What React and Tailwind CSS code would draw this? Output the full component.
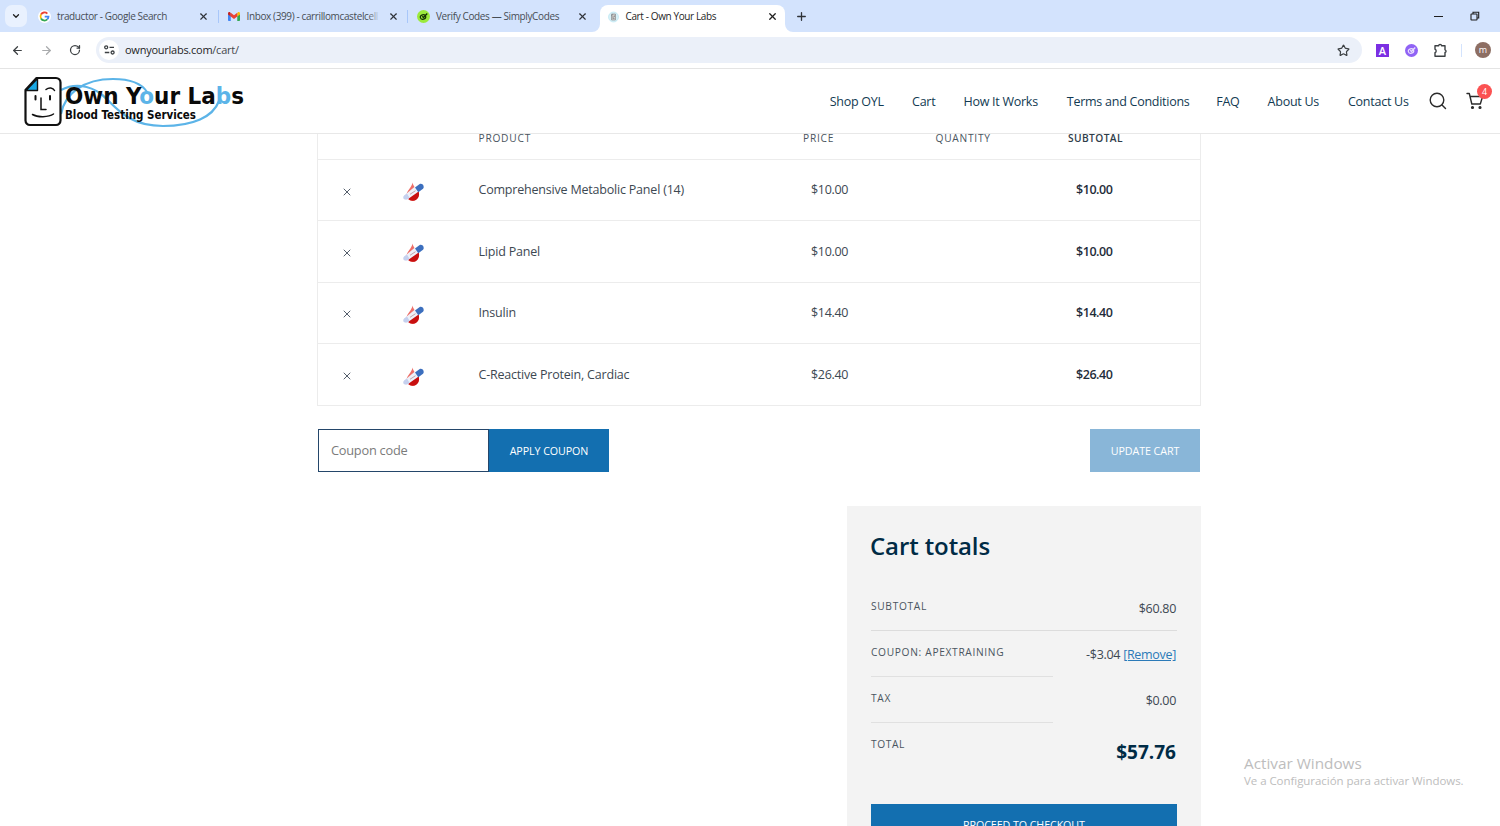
// src/App.jsx
import React, { useState } from 'react';
import { ArrowLeft, ArrowRight, ChevronDown, Plus, RotateCw, Star, X } from 'lucide-react';

const tabs = [
  { title: 'traductor - Google Search', icon: 'google' },
  { title: 'Inbox (399) - carrillomcastelcell', icon: 'gmail', fade: true },
  { title: 'Verify Codes — SimplyCodes', icon: 'simply' },
];

const navLinks = [
  { label: 'Shop OYL', width: 'w-[55px]' },
  { label: 'Cart', width: 'w-[24px]' },
  { label: 'How It Works', width: 'w-[76px]' },
  { label: 'Terms and Conditions', width: 'w-[122px]' },
  { label: 'FAQ', width: 'w-[24px]' },
  { label: 'About Us', width: 'w-[53px]' },
  { label: 'Contact Us', width: 'w-[62px]' },
];

const items = [
  { name: 'Comprehensive Metabolic Panel (14)', price: '$10.00' },
  { name: 'Lipid Panel', price: '$10.00' },
  { name: 'Insulin', price: '$14.40' },
  { name: 'C-Reactive Protein, Cardiac', price: '$26.40' },
];

const COLS = 'grid grid-cols-[60px_100.5px_324.5px_132.500px_132.500px_1fr]';

function GoogleIcon() {
  return (
    <svg width="13" height="13" viewBox="0 0 26 26">
      <circle cx="13" cy="13" r="13" fill="#fff" />
      <g fill="none" strokeWidth="3.6">
        <path d="M18.7 7.3A8 8 0 0 0 6 9.1" stroke="#ea4335" />
        <path d="M6 9.1a8 8 0 0 0 0 7.8" stroke="#fbbc05" />
        <path d="M6 16.9a8 8 0 0 0 12.5 2" stroke="#34a853" />
        <path d="M18.5 18.9A8 8 0 0 0 21 13.2h-7.6" stroke="#4285f4" />
      </g>
    </svg>
  );
}

function GmailIcon() {
  return (
    <svg width="12" height="9" viewBox="0 0 24 18">
      <path d="M0 3v13.5C0 17.3.7 18 1.5 18H5.5V8z" fill="#4285f4" />
      <path d="M24 3v13.5c0 .8-.7 1.5-1.5 1.5H18.5V8z" fill="#34a853" />
      <path d="M18.5 2.5V9L24 5V2.5C24 .3 21.5-.8 19.8.5z" fill="#fbbc04" />
      <path d="M5.5 2.5V9L0 5V2.5C0 .3 2.5-.8 4.2.5z" fill="#c5221f" />
      <path d="M5.5 1.5V9l6.5 5 6.5-5V1.5L12 6.5z" fill="#ea4335" />
    </svg>
  );
}

function SimplyIcon({ bg, fg, size }) {
  return (
    <svg width={size} height={size} viewBox="0 0 26 26">
      <circle cx="13" cy="13" r="13" fill={bg} />
      <ellipse cx="12" cy="14" rx="5.5" ry="4.5" fill="none" stroke={fg} strokeWidth="2.4" transform="rotate(-15 12 14)" />
      <path d="M10.500 12.500l2.500 2.500 7.500-8" fill="none" stroke={fg} strokeWidth="2.800" />
    </svg>
  );
}

function CartFavicon() {
  return (
    <svg width="11" height="12" viewBox="0 0 22 24">
      <ellipse cx="11" cy="12" rx="10" ry="10" fill="#d9f1f7" stroke="#a5deee" />
      <path d="M7 6h8v12H7z" fill="#d3cdc8" stroke="#8b9296" strokeWidth="1.5" />
      <path d="M7 10l3-4M10 10v4M13 9v3M9 15h4" stroke="#6f7a80" strokeWidth="1.3" />
    </svg>
  );
}

function TabIcon({ name }) {
  if (name === 'google') return <GoogleIcon />;
  if (name === 'gmail') return <GmailIcon />;
  return <SimplyIcon bg="#9bea3c" fg="#173404" size={13} />;
}

function TabStrip() {
  return (
    <div className="flex h-8 shrink-0 items-center bg-[#d3e3fd] pl-[5px] text-[10px] tracking-[-0.38px] text-[#474d55]">
      <button className="flex h-[22px] w-[22px] items-center justify-center rounded-[7px] bg-[#e9f1fe] text-[#1f1f1f]">
        <ChevronDown size={10} strokeWidth={3} />
      </button>
      <div className="flex pl-[2px]">
        {tabs.map((tab) => (
          <div key={tab.title} className="flex h-5 w-[189.5px] items-center pl-[9px]">
            <span className="flex w-[13px] justify-center"><TabIcon name={tab.icon} /></span>
            <span className="relative ml-[6px] w-[133px] whitespace-nowrap">
              {tab.title}
              {tab.fade && <span className="absolute inset-y-0 right-0 w-3 bg-gradient-to-r from-transparent to-[#d3e3fd]" />}
            </span>
            <X className="ml-[8px] text-[#2f3338]" size={11} strokeWidth={2.5} />
            <span className={tab.icon === 'simply' ? 'hidden' : 'ml-auto h-[13px] w-px bg-[#a8c7fa]'} />
          </div>
        ))}
      </div>
      <div className="relative ml-[2px] flex h-[27px] w-[185px] items-center self-end rounded-t-[8px] bg-white pb-[4px] pl-[8px] text-[#1f1f1f]">
        <svg className="absolute bottom-0 -left-[8px]" width="8" height="8" viewBox="0 0 8 8">
          <path d="M8 0v8H0a8 8 0 0 0 8-8z" fill="#fff" />
        </svg>
        <svg className="absolute -right-[8px] bottom-0" width="8" height="8" viewBox="0 0 8 8">
          <path d="M0 0v8h8a8 8 0 0 1-8-8z" fill="#fff" />
        </svg>
        <CartFavicon />
        <span className="ml-[7px] w-[141px] whitespace-nowrap">Cart - Own Your Labs</span>
        <X size={11} strokeWidth={2.8} />
      </div>
      <Plus className="ml-[10px] text-[#2f3338]" size={13} strokeWidth={2.4} />
      <div className="ml-auto flex items-center gap-[27px] pr-[20px]">
        <span className="h-px w-[9px] bg-[#1f1f1f]" />
        <svg width="10" height="10" viewBox="0 0 10 10" fill="none" stroke="#1f1f1f" strokeWidth="1.1">
          <rect x="1" y="3" width="6" height="6" rx="0.5" />
          <path d="M3 3V1.3h5.7V7H7" />
        </svg>
      </div>
    </div>
  );
}

function Toolbar() {
  return (
    <div className="flex h-[37px] shrink-0 items-center border-b border-[#e4e4e4] bg-white pl-[11px] text-[#3c4043]">
      <ArrowLeft size={13} strokeWidth={2.3} />
      <ArrowRight className="ml-4 text-[#a9abad]" size={13} strokeWidth={2.3} />
      <RotateCw className="ml-4" size={12} strokeWidth={2.5} />
      <div className="ml-[15px] flex h-[26px] w-[1266px] items-center rounded-full bg-[#ebf0f9] pr-[12px] pl-[3px]">
        <span className="flex h-[20px] w-[20px] items-center justify-center rounded-full bg-white">
          <svg width="11" height="10" viewBox="0 0 11 10" fill="none" stroke="#3c4043" strokeWidth="1.3">
            <circle cx="2.2" cy="2.3" r="1.5" />
            <path d="M5.5 2.3h4.5M0.8 7.5h4.5" />
            <circle cx="8.6" cy="7.5" r="1.5" />
          </svg>
        </span>
        <span className="ml-[6px] pt-px text-[11px] tracking-[-0.25px] text-[#45494d]">
          <span className="text-[#1f1f1f]">ownyourlabs.com</span>/cart/
        </span>
        <Star className="ml-auto" size={13} strokeWidth={2.2} />
      </div>
      <span className="ml-[14px] flex h-[13px] w-[13px] items-center justify-center bg-[#7b2fe3] text-[11px] leading-none font-semibold text-white">A</span>
      <span className="ml-[16px]"><SimplyIcon bg="#9063f5" fg="#e9defd" size={13} /></span>
      <svg className="ml-[15px]" width="15" height="15" viewBox="0 0 15 15" fill="none" stroke="#3c4043" strokeWidth="1.4" strokeLinejoin="round">
        <path d="M2 2.8h3.7a1.4 1.4 0 0 1 2.8 0H12v4a1.4 1.4 0 0 1 0 2.7v3.7H2V9.7a1.9 1.9 0 0 0 0-3.5z" />
      </svg>
      <span className="ml-[13px] h-[13px] w-px bg-[#d3e3fd]" />
      <span className="ml-[13px] flex h-4 w-4 items-center justify-center rounded-full bg-[#8d6e63] pb-px text-[9px] leading-none text-white">m</span>
    </div>
  );
}

function Logo() {
  return (
    <svg className="mt-px" width="226" height="56" viewBox="0 0 226 56">
      {/* blue thread running behind the lettering */}
      <g fill="none" stroke="#5cb4e8" strokeWidth="2.2">
        <path d="M37 40C41 19 60 5 89 5c17 0 29 5 34 13" />
        <path d="M37 16c13-7 28-5 40 4 13 10 24 32 62 32 30 0 50-9 56-25" />
      </g>
      <path d="M12.5 4H32a4.5 4.5 0 0 1 4.5 4.5v38A4.5 4.5 0 0 1 32 51H6a4.5 4.5 0 0 1-4.5-4.5V16z" fill="#fff" stroke="#111" strokeWidth="2.2" strokeLinejoin="round" />
      <path d="M13.5 4.5v12H2z" fill="#18a8e4" stroke="#111" strokeWidth="1.4" strokeLinejoin="round" />
      <g fill="none" stroke="#111" strokeWidth="1.5" strokeLinecap="round">
        <path d="M22 15.500c3-2.500 7-2 8.500 1" />
        <path d="M11.500 22v3.500M26 22v3.500" strokeWidth="2" />
        <path d="M17 24v11.500h5" />
        <path d="M8.500 40.500c5 3 16 3 21-.5" />
      </g>
      <g className="font-['DejaVu_Sans_Condensed','DejaVu_Sans',sans-serif] font-bold">
        <text x="41" y="29.500" fontSize="22.500" fill="#0a0a0a" textLength="179" lengthAdjust="spacingAndGlyphs">
          Own Y<tspan fill="#5cb4e8">o</tspan>ur La<tspan fill="#5cb4e8">b</tspan>s
        </text>
        <text x="41" y="45" fontSize="12" fill="#0a0a0a" textLength="131" lengthAdjust="spacingAndGlyphs">
          Blood Testing Services
        </text>
      </g>
    </svg>
  );
}

function SiteHeader() {
  return (
    <header className="flex h-[65px] shrink-0 items-center border-b border-[#e8e8e8] bg-white pl-[24px]">
      <Logo />
      <nav className="ml-auto flex gap-[27.4px] pt-[2px] text-[12.5px] tracking-[-0.26px] text-[#123a52]">
        {navLinks.map((link) => (
          <a key={link.label} href="#" className={`whitespace-nowrap ${link.width}`}>{link.label}</a>
        ))}
      </nav>
      <svg className="ml-[19px]" width="18" height="18" viewBox="0 0 18 18" fill="none" stroke="#2b2b2b" strokeWidth="1.4" strokeLinecap="round">
        <circle cx="8" cy="8" r="6.8" />
        <path d="M13 13l3.5 3.5" />
      </svg>
      <div className="relative mr-[15px] ml-[19px]">
        <svg width="19" height="18" viewBox="0 0 19 18" fill="none" stroke="#2b2b2b" strokeWidth="1.4" strokeLinecap="round" strokeLinejoin="round">
          <path d="M1 1.5h2.3l2.5 10.5h8.5l2.3-7.5H4.2" />
          <circle cx="6.5" cy="15.5" r="0.9" fill="#2b2b2b" />
          <circle cx="14" cy="15.5" r="0.9" fill="#2b2b2b" />
        </svg>
        <span className="absolute -top-[8px] -right-[7px] flex h-[15px] w-[15px] items-center justify-center rounded-full bg-[#fb5252] text-[9px] leading-none text-white">4</span>
      </div>
    </header>
  );
}

function TubeIcon() {
  return (
    <svg width="22" height="20" viewBox="0 0 22 20">
      <path d="M9.500 0.500c.5 4 6 8 6 12.500a6 6 0 0 1-12 0C3.500 9 9 5 9.500.5z" fill="#ee6f69" />
      <path d="M15.500 8.500c2 6-1.500 10.300-5.500 10.300-2.500 0-4.500-1.300-5.500-3z" fill="#c80f0f" />
      <path d="M12.300 4.300l3.700 5L5 17c-2 1.200-4.700.5-4.700-1.500 0-1 .5-1.800 1.500-2.500z" fill="#eef0f8" />
      <path d="M4 11.500l2.500 4.300L5 17c-2 1.200-4.700.5-4.700-1.500 0-1 .5-1.800 1.500-2.500z" fill="#c5d0ee" />
      <path d="M7 12.300l5.500-3.600" stroke="#c3a3ac" strokeWidth="1" />
      <path d="M12 5.500l4.700-3.500c2.700-1.500 5.300 2.500 3.300 4.800l-4.700 3.400z" fill="#3c6fbe" />
    </svg>
  );
}

function CartTable() {
  return (
    <div className="h-[271.5px] border border-t-0 border-[#ececec]">
      <div className={`${COLS} h-[26px] border-b border-[#ececec] text-[10.2px] leading-[9px] tracking-[0.76px] text-[#4a5560]`}>
        <span />
        <span />
        <span>PRODUCT</span>
        <span>PRICE</span>
        <span>QUANTITY</span>
        <span className="font-semibold tracking-[0.4px] text-[#2f3d49]">SUBTOTAL</span>
      </div>
      {items.map((item) => (
        <div key={item.name} className={`${COLS} h-[61.3px] items-center border-b border-[#ececec] text-[12.5px] tracking-[-0.2px] text-[#3d4852] last:border-b-0`}>
          <button className="flex justify-center pt-[3px] pr-[3px] text-[#4b5563]"><X size={12} strokeWidth={1.9} /></button>
          <span className="pt-[4px] pl-[25px]"><TubeIcon /></span>
          <span className="pt-px">{item.name}</span>
          <span className="pt-px pl-2 tracking-[-0.3px]">{item.price}</span>
          <span />
          <span className="pt-px pl-2 font-semibold tracking-[-0.45px] text-[#1f2d3a]">{item.price}</span>
        </div>
      ))}
    </div>
  );
}

function TotalsRow({ label, short, children }) {
  return (
    <div className="h-[46px]">
      <div className="flex h-[45px] justify-between pt-[15px]">
        <span className="text-[10.2px] leading-[13px] tracking-[0.68px] text-[#4a5560]">{label}</span>
        <span className="pt-px pr-[1px] text-[12.5px] leading-[16px] tracking-[-0.3px] text-[#3d4852]">{children}</span>
      </div>
      <div className={short ? 'h-px w-[182px] bg-[#e0e0e0]' : 'h-px bg-[#dcdcdc]'} />
    </div>
  );
}

function CartTotals() {
  return (
    <section className="mt-[34px] ml-auto h-[400px] w-[354px] bg-[#f3f3f3] px-6 pt-[22px]">
      <h2 className="-ml-px text-[24px] leading-9 font-semibold tracking-[-0.1px] text-[#002b45]">Cart totals</h2>
      <div className="mt-[21px]">
        <TotalsRow label="SUBTOTAL">$60.80</TotalsRow>
        <TotalsRow label="COUPON: APEXTRAINING" short>
          -$3.04 <a href="#" className="text-[#2b7ab8] underline">[Remove]</a>
        </TotalsRow>
        <TotalsRow label="TAX" short>$0.00</TotalsRow>
        <div className="flex h-[81px] justify-between pt-[15px]">
          <span className="text-[10.2px] leading-[13px] tracking-[0.6px] text-[#4a5560]">TOTAL</span>
          <span className="pt-[2px] pr-[1px] text-[19px] leading-6 font-bold text-[#002b45]">$57.76</span>
        </div>
      </div>
      <button className="flex h-[42px] w-full items-center justify-center bg-[#136fb0] pt-px text-[10.7px] tracking-[-0.08px] text-white">PROCEED TO CHECKOUT</button>
    </section>
  );
}

export default function App() {
  const [coupon, setCoupon] = useState('');

  return (
    <div className="relative flex h-screen flex-col overflow-hidden bg-white font-['Open_Sans','Noto_Sans',sans-serif]">
      <TabStrip />
      <Toolbar />
      <SiteHeader />
      <main className="ml-[317px] w-[884px]">
        <CartTable />
        <div className="mt-[23.5px] flex h-[43px] pr-px pl-[1px]">
          <input
            value={coupon}
            onChange={(e) => setCoupon(e.target.value)}
            placeholder="Coupon code"
            className="w-[171px] border border-[#24466a] px-3 text-[12.8px] tracking-[-0.25px] placeholder:text-[#7b7b7b]"
          />
          <button className="w-[120px] bg-[#136fb0] pt-px text-[10.7px] tracking-[-0.08px] text-white">APPLY COUPON</button>
          <button className="ml-auto w-[110px] bg-[#89b6d8] pt-px text-[10.7px] tracking-[-0.08px] text-white">UPDATE CART</button>
        </div>
        <CartTotals />
      </main>

      {/* Windows activation watermark */}
      <div className="absolute top-[753px] left-[1244px] text-[#bdbdbd]">
        <p className="text-[15.3px] leading-5">Activar Windows</p>
        <p className="text-[11.5px] leading-4 tracking-[-0.05px]">Ve a Configuración para activar Windows.</p>
      </div>
    </div>
  );
}
